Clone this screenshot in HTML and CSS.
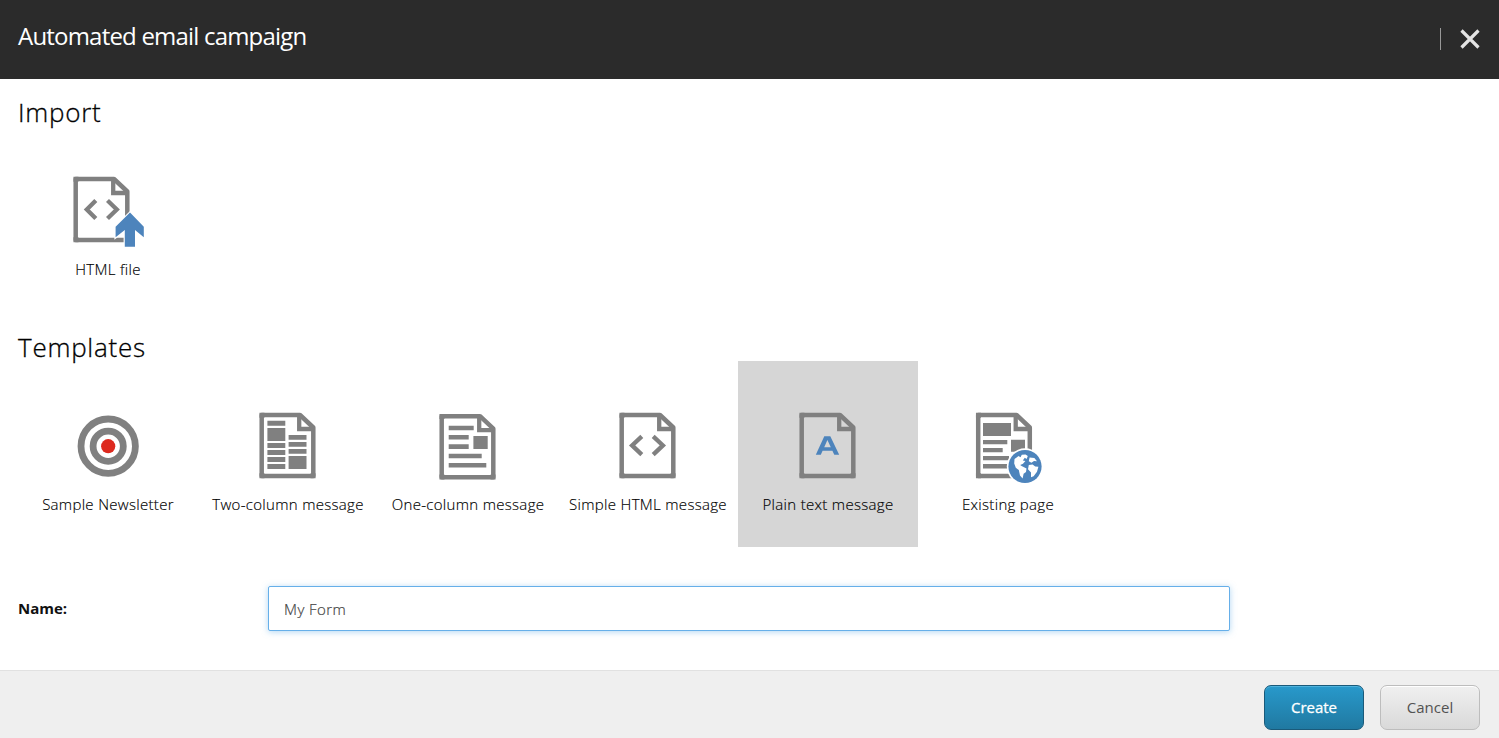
FILE: index.html
```html
<!DOCTYPE html>
<html lang="en">
<head>
<meta charset="utf-8">
<title>Automated email campaign</title>
<link rel="stylesheet" href="styles.css">
</head>
<body>
<svg class="defs" aria-hidden="true">
  <symbol id="doc" viewBox="0 0 96 90">
    <path d="M21.7 15H60L73.3 27.5V76H21.7Z" fill="none" stroke="#808080" stroke-width="4.5" stroke-linejoin="round"/>
    <path d="M19.45 12.75h5v5h-5zM19.45 73.25h5v5h-5zM70.55 73.25h5v5h-5z" fill="#808080"/>
    <path d="M59.2 15V29H73" fill="none" stroke="#808080" stroke-width="4.3"/>
  </symbol>
</svg>
<div class="dialog">
  <header class="header">
    <h1 class="title">Automated email campaign</h1>
    <div class="tools"><span class="divider"></span>
      <svg class="close" viewBox="0 0 22 22"><path d="M2.5 2.5L19.5 19.5M19.5 2.5L2.5 19.5"/></svg>
    </div>
  </header>
  <main class="content">
    <section class="section">
      <h2 class="heading">Import</h2>
      <div class="tiles">
        <div class="tile">
          <svg class="icon" viewBox="0 0 96 90"><use href="#doc" x="-6" y="-1" width="96" height="90"/>
            <path class="chev" d="M35.8 35.5L26.8 44.5L35.8 53.5M47.5 35.5L56.8 44.5L47.5 53.5"/>
            <path d="M70 47.6L83.8 61.8V72.2L75 65V81.7H64.8V65L55.6 72.2V61.8Z" fill="#4d84bc" stroke="#fff" stroke-width="2.4" paint-order="stroke"/></svg>
          <span class="label">HTML file</span>
        </div>
      </div>
    </section>
    <section class="section">
      <h2 class="heading">Templates</h2>
      <div class="tiles">
        <div class="tile">
          <svg class="icon" viewBox="0 0 96 90"><circle class="ring" cx="48.2" cy="46.2" r="27.2"/><circle class="ring" cx="48.2" cy="46.2" r="15.1"/><circle cx="48.2" cy="46.2" r="7.1" fill="#dd2a1f"/></svg>
          <span class="label">Sample Newsletter</span>
        </div>
        <div class="tile">
          <svg class="icon" viewBox="0 0 96 90"><use href="#doc" width="96" height="90"/>
            <path class="fill" d="M27.4 20.8h17.9v5H27.4zM27.4 28h17.9v13H27.4zM27.4 43h17.9v5H27.4zM27.4 50h17.9v5H27.4zM27.4 57h17.9v5H27.4zM27.4 64h17.9v5H27.4zM48.6 35h17.9v4.8H48.6zM48.6 42h17.9v4.8H48.6zM48.6 49h17.9v4.8H48.6zM48.6 56h17.9v13H48.6z"/></svg>
          <span class="label">Two-column message</span>
        </div>
        <div class="tile">
          <svg class="icon" viewBox="0 0 96 90"><use href="#doc" y="1.2" width="96" height="90"/>
            <path class="fill" d="M28.7 25.7h25v4.5h-25zM28.7 35h20v4.5h-20zM28.7 44.3h20v4.7h-20zM28.7 53.7h33v4.6h-33zM28.7 63h37.6v4.6H28.7zM53.4 36h14.3v13H53.4z"/></svg>
          <span class="label">One-column message</span>
        </div>
        <div class="tile">
          <svg class="icon" viewBox="0 0 96 90"><use href="#doc" width="96" height="90"/>
            <path class="chev" d="M41.8 36.4L32.1 45.4L41.8 54.6M53.2 36.4L62.9 45.4L53.2 54.6"/></svg>
          <span class="label">Simple HTML message</span>
        </div>
        <div class="tile selected">
          <svg class="icon" viewBox="0 0 96 90"><use href="#doc" width="96" height="90"/>
            <path fill="#4d84bc" fill-rule="evenodd" d="M35.8 54.8L44.3 36.2H50.3L59.2 54.8H54.3L52.4 50.8H42.6L40.8 54.8ZM44.2 47.3H50.8L47.4 40Z"/></svg>
          <span class="label">Plain text message</span>
        </div>
        <div class="tile">
          <svg class="icon" viewBox="0 0 96 90"><use href="#doc" x="-3.5" width="96" height="90"/>
            <path class="fill" d="M23 23h28v13H23zM23 40h24.3v4.3H23zM23 48h19.7v4.3H23zM23 56h26v4.3H23zM23 64h25v4.6H23zM51 39.7h14v12H51z"/>
            <circle cx="65" cy="66.5" r="18.2" fill="#fff"/>
            <circle cx="65" cy="66.5" r="16.6" fill="#4d84bc"/>
            <path fill="#fff" d="M54.5 59L58.5 56L60.5 57.2L61.8 54.8L65.5 54.4L67.8 56L66.6 59L64.8 57.8L62.8 60.4L65.4 61L63 63.8L60.2 65L61.6 66L66.5 68.6L66 72L63.6 73.8L62.6 78.4L60 75.5L58.8 70L55.8 67.8L54.2 63.4ZM69.6 57.4L74.4 58L77 61.2L74 61L71.4 62.8L68.8 61.2ZM68.8 65L72.6 64.4L75.2 66.4L78.4 66.8L77 71.8L73.6 76.2L71 77.2L71 72.4L68 69.2Z"/></svg>
          <span class="label">Existing page</span>
        </div>
      </div>
    </section>
    <div class="form-row">
      <label class="name" for="name">Name:</label>
      <input class="field" id="name" type="text" value="My Form">
    </div>
  </main>
  <footer class="footer">
    <button class="btn primary" type="button">Create</button>
    <button class="btn" type="button">Cancel</button>
  </footer>
</div>
</body>
</html>
```
FILE: styles.css
```css
* { box-sizing: border-box; }
body { margin: 0; background: #fff; color: #111; font-family: "Open Sans", sans-serif; }
.defs { display: none; }
.dialog { display: flex; flex-direction: column; height: 738px; }
.header { display: flex; justify-content: space-between; height: 79px; padding: 0 18px; background: #2b2b2b; }
.title { margin: 19px 0 0; color: #fff; font-size: 24px; line-height: 33px; font-weight: 400; letter-spacing: -0.8px; }
.tools { display: flex; gap: 18px; margin-top: 28px; }
.divider { width: 1px; height: 22px; background: #999; }
.close { width: 22px; height: 22px; fill: none; stroke: #e4e4e4; stroke-width: 3.2; }
.content { flex: 1; padding: 0 18px; }
.section { height: 235px; }
.heading { height: 47px; margin: 0; padding-top: 15px; font-size: 26px; line-height: 36px; font-weight: 300; letter-spacing: 0.75px; color: #000; -webkit-text-stroke: 0.3px #000; }
.tiles { display: flex; }
.tile { display: flex; flex-direction: column; align-items: center; width: 180px; height: 186px; padding-top: 39px; }
.selected { background: #d6d6d6; }
.icon { display: block; width: 96px; height: 90px; }
.fill { fill: #808080; }
.ring { fill: none; stroke: #808080; stroke-width: 6.8; }
.chev { fill: none; stroke: #808080; stroke-width: 4.3; }
.label { margin-top: 4px; font-size: 15px; line-height: 20px; white-space: nowrap; color: #000; font-weight: 300; letter-spacing: 0.31px; -webkit-text-stroke: 0.15px #000; }
.form-row { display: flex; align-items: center; height: 45px; margin-top: 37px; }
.name { width: 250px; padding-bottom: 2px; font-size: 15px; font-weight: 700; }
.field { width: 962px; height: 45px; padding: 1px 15px 0; border: 1px solid #66afe9; border-radius: 2px; outline: 0; box-shadow: 0 1px 6px rgba(102,175,233,.5); color: #444; font: 300 15px "Open Sans", sans-serif; letter-spacing: 0.45px; -webkit-text-stroke: 0.2px #444; }
.footer { display: flex; justify-content: flex-end; gap: 16px; height: 68px; padding: 14px 19px 0; border-top: 1px solid #e1e1e1; background: #efefef; }
.btn { width: 100px; height: 45px; padding: 0 0 2px; border: 1px solid #bdbdbd; border-radius: 7px; background: linear-gradient(#f0f0f0, #d9d9d9); box-shadow: inset 0 1px 0 #fff; color: #525252; font: 400 15px "Open Sans", sans-serif; }
.primary { border-color: #1a5a7a; background: linear-gradient(#2899cb, #2079a1); box-shadow: inset 0 1px 0 #4fb2dc; color: #fff; -webkit-text-stroke: 0.3px #fff; }
```
